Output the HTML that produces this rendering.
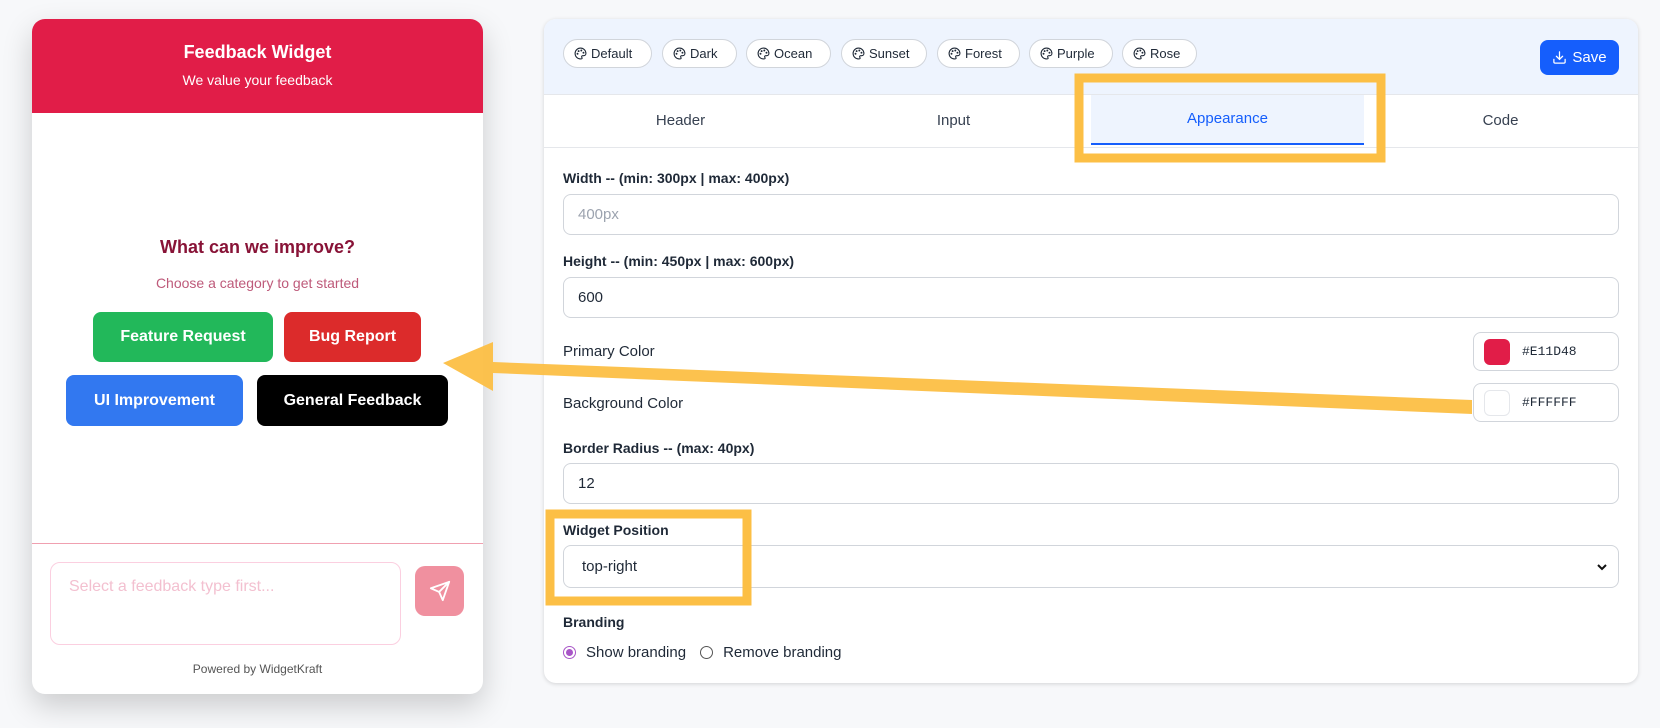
<!DOCTYPE html>
<html><head><meta charset="utf-8"><style>
*{box-sizing:border-box;margin:0;padding:0}
body{width:1660px;height:728px;background:#f7f8fa;font-family:"Liberation Sans",sans-serif;position:relative;overflow:hidden;color:#1f2937}
.abs{position:absolute}
.w{left:32px;top:19px;width:451px;height:675px;background:#fff;border-radius:13px;box-shadow:0 12px 30px rgba(0,0,0,.18);overflow:hidden}
.wh{left:0;top:0;width:451px;height:94px;background:#e11d48;color:#fff;text-align:center}
.btn{position:absolute;color:#fff;font-weight:bold;font-size:16px;border-radius:8px;display:flex;align-items:center;justify-content:center}
.p{left:544px;top:19px;width:1094px;height:664px;background:#fff;border-radius:12px;box-shadow:0 1px 4px rgba(0,0,0,.15);overflow:hidden}
.chip{position:absolute;top:20px;height:29px;border:1px solid #d1d5db;border-radius:15px;background:#fff;font-size:13px;display:flex;align-items:center;padding-left:10px;color:#1f2937}
.chip svg{margin-right:4px}
.lab{position:absolute;left:19px;font-size:14px;font-weight:bold;color:#1f2937}
.inp{position:absolute;left:19px;width:1056px;height:41px;border:1px solid #d1d5db;border-radius:8px;font-size:15px;padding-left:14px;display:flex;align-items:center}
.tab{position:absolute;top:76px;height:52px;width:273px;text-align:center;line-height:52px;font-size:15px;color:#374151}
.cb{position:absolute;left:929px;width:146px;height:39px;border:1px solid #d1d5db;border-radius:8px;display:flex;align-items:center;padding-left:10px;font-family:"Liberation Mono",monospace;font-size:13px}
.cb span{width:26px;height:26px;border-radius:6px;margin-right:12px;display:inline-block}
</style></head><body>
<svg width="0" height="0" style="position:absolute"><defs><symbol id="pal" viewBox="0 0 24 24"><g fill="none" stroke="#1f2937" stroke-width="2" stroke-linecap="round" stroke-linejoin="round"><path d="M12 22a10 10 0 1 1 10-10c0 2.5-2 4-4 4h-2a2 2 0 0 0-1.5 3.3c.4.5.5 1 .5 1.4 0 .8-.7 1.3-3 1.3z"/><circle cx="13.5" cy="6.5" r=".8" fill="#1f2937"/><circle cx="17.5" cy="10.5" r=".8" fill="#1f2937"/><circle cx="8.5" cy="7.5" r=".8" fill="#1f2937"/><circle cx="6.5" cy="12.5" r=".8" fill="#1f2937"/></g></symbol></defs></svg>
<div class="abs w">
 <div class="abs wh"><div style="font-size:18px;font-weight:bold;margin-top:23px">Feedback Widget</div><div style="font-size:14px;margin-top:9px">We value your feedback</div></div>
 <div class="abs" style="left:0;width:451px;top:218px;text-align:center;font-size:18px;font-weight:bold;color:#881337">What can we improve?</div>
 <div class="abs" style="left:0;width:451px;top:256px;text-align:center;font-size:14px;color:#be5a7a">Choose a category to get started</div>
 <div class="btn" style="left:61px;top:293px;width:180px;height:50px;background:#22b85a">Feature Request</div>
 <div class="btn" style="left:252px;top:293px;width:137px;height:50px;background:#dc2b2b">Bug Report</div>
 <div class="btn" style="left:34px;top:356px;width:177px;height:51px;background:#3278f0">UI Improvement</div>
 <div class="btn" style="left:225px;top:356px;width:191px;height:51px;background:#000">General Feedback</div>
 <div class="abs" style="left:0;top:524px;width:451px;height:1px;background:#f0a0b0"></div>
 <div class="abs" style="left:18px;top:543px;width:351px;height:83px;border:1px solid #fbcfe0;border-radius:10px;padding:15px 18px;font-size:16px;color:#f3c0d0">Select a feedback type first...</div>
 <div class="abs" style="left:383px;top:547px;width:49px;height:50px;border-radius:10px;background:#f0909f;display:flex;align-items:center;justify-content:center">
  <svg width="22" height="22" viewBox="0 0 24 24" fill="none" stroke="#fff" stroke-width="2" stroke-linejoin="round" stroke-linecap="round"><path d="M22 2 11 13"/><path d="M22 2 15 22 11 13 2 9z"/></svg></div>
 <div class="abs" style="left:0;width:451px;top:643px;text-align:center;font-size:12px;color:#555">Powered by WidgetKraft</div>
</div>

<div class="abs p">
 <div class="abs" style="left:0;top:0;width:1094px;height:76px;background:#eef4fe;border-bottom:1px solid #e5e7eb"></div>
 <div class="chip" style="left:19px;width:89px"><svg width="13" height="13"><use href="#pal"/></svg>Default</div>
 <div class="chip" style="left:118px;width:75px"><svg width="13" height="13"><use href="#pal"/></svg>Dark</div>
 <div class="chip" style="left:202px;width:85px"><svg width="13" height="13"><use href="#pal"/></svg>Ocean</div>
 <div class="chip" style="left:297px;width:86px"><svg width="13" height="13"><use href="#pal"/></svg>Sunset</div>
 <div class="chip" style="left:393px;width:83px"><svg width="13" height="13"><use href="#pal"/></svg>Forest</div>
 <div class="chip" style="left:485px;width:84px"><svg width="13" height="13"><use href="#pal"/></svg>Purple</div>
 <div class="chip" style="left:578px;width:75px"><svg width="13" height="13"><use href="#pal"/></svg>Rose</div>
 <div class="abs" style="left:996px;top:21px;width:79px;height:35px;background:#155efc;border-radius:8px;color:#fff;font-size:15px;display:flex;align-items:center;justify-content:center">
  <svg width="15" height="15" viewBox="0 0 24 24" fill="none" stroke="#fff" stroke-width="2" stroke-linecap="round" style="margin-right:5px"><path d="M21 15v4a2 2 0 0 1-2 2H5a2 2 0 0 1-2-2v-4"/><path d="M7 10l5 5 5-5"/><path d="M12 15V3"/></svg>Save</div>
 <div class="abs" style="left:0;top:128px;width:1094px;height:1px;background:#e5e7eb"></div>
 <div class="tab" style="left:0">Header</div>
 <div class="tab" style="left:273px">Input</div>
 <div class="tab" style="left:547px;width:273px;background:#eef4fe;color:#155efc;border-bottom:2px solid #155efc;height:50px;line-height:48px">Appearance</div>
 <div class="tab" style="left:820px">Code</div>
 <div class="lab" style="top:151px">Width -- (min: 300px | max: 400px)</div>
 <div class="inp" style="top:175px;color:#9ca3af">400px</div>
 <div class="lab" style="top:234px">Height -- (min: 450px | max: 600px)</div>
 <div class="inp" style="top:258px">600</div>
 <div class="lab" style="top:324px;font-weight:normal;font-size:15px">Primary Color</div>
 <div class="cb" style="top:313px"><span style="background:#e11d48"></span>#E11D48</div>
 <div class="lab" style="top:376px;font-weight:normal;font-size:15px">Background Color</div>
 <div class="cb" style="top:364px"><span style="border:1px solid #e5e7eb"></span>#FFFFFF</div>
 <div class="lab" style="top:421px">Border Radius -- (max: 40px)</div>
 <div class="inp" style="top:444px">12</div>
 <div class="lab" style="top:503px">Widget Position</div>
 <div class="inp" style="top:526px;height:43px;padding-left:18px;justify-content:space-between;padding-right:10px">top-right<svg width="12" height="12" viewBox="0 0 12 12"><path d="M2 4l4 4 4-4" stroke="#111" stroke-width="2" fill="none"/></svg></div>
 <div class="lab" style="top:595px">Branding</div>
 <div class="abs" style="left:19px;top:625px;font-size:15px;display:flex;align-items:center">
  <span style="width:13px;height:13px;border-radius:50%;border:1px solid #a855c7;display:inline-flex;align-items:center;justify-content:center;margin-right:10px"><span style="width:7px;height:7px;border-radius:50%;background:#a855c7"></span></span>Show branding
  <span style="width:13px;height:13px;border-radius:50%;border:1px solid #555;display:inline-block;margin:0 10px 0 14px"></span>Remove branding</div>
</div>

<svg class="abs" style="left:0;top:0" width="1660" height="728">
 <g fill="none" stroke="#fcbf45" stroke-width="9">
  <rect x="1079" y="78" width="302" height="80"/>
  <rect x="550" y="514" width="197" height="87"/>
 </g>
 <polygon fill="#fcbf45" fill-opacity=".95" points="443,363 493,342 493,362 1472,400 1472,414 493,373 493,391"/>
</svg>
</body></html>
